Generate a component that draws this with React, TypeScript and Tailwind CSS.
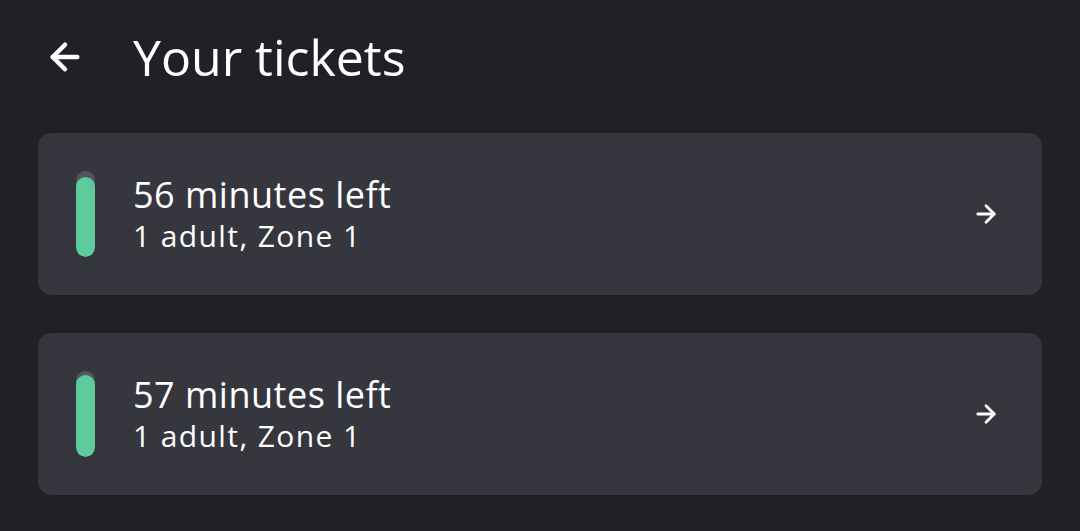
import { ArrowLeft, ArrowRight } from "lucide-react";

const tickets = [
  { id: 1, title: "56 minutes left", detail: "1 adult, Zone 1", progress: 93 },
  { id: 2, title: "57 minutes left", detail: "1 adult, Zone 1", progress: 95 },
];

function TicketCard({ title, detail, progress }: { title: string; detail: string; progress: number }) {
  return (
    <div className="flex h-[162px] items-center rounded-[14px] bg-[#36363f] pl-[38px] pr-[42px]">
      <div className="flex h-[86px] w-[19px] flex-col justify-end overflow-hidden rounded-full bg-[#55555d]">
        <div className="w-full rounded-full bg-[#5ecb9c]" style={{ height: `${progress}%` }} />
      </div>
      <div className="ml-[38px] flex flex-1 flex-col">
        <span className="text-[36px] leading-[44px] font-medium tracking-[0.5px] text-white">{title}</span>
        <span className="text-[30px] leading-[38px] tracking-[1.4px] text-white">{detail}</span>
      </div>
      <ArrowRight className="h-[28px] w-[28px] text-white" strokeWidth={2.4} />
    </div>
  );
}

export default function App() {
  return (
    <div className="h-[531px] w-[1080px] overflow-hidden bg-[#202027] font-['Open_Sans',sans-serif]">
      <div className="flex h-[120px] items-center pl-[44px] pb-[6px]">
        <ArrowLeft className="h-[42px] w-[42px] text-white" strokeWidth={2.6} />
        <h1 className="ml-[47px] text-[50px] font-normal text-white">Your tickets</h1>
      </div>
      <div className="flex flex-col gap-[38px] px-[38px] pt-[13px]">
        {tickets.map((t) => (
          <TicketCard key={t.id} title={t.title} detail={t.detail} progress={t.progress} />
        ))}
      </div>
    </div>
  );
}
